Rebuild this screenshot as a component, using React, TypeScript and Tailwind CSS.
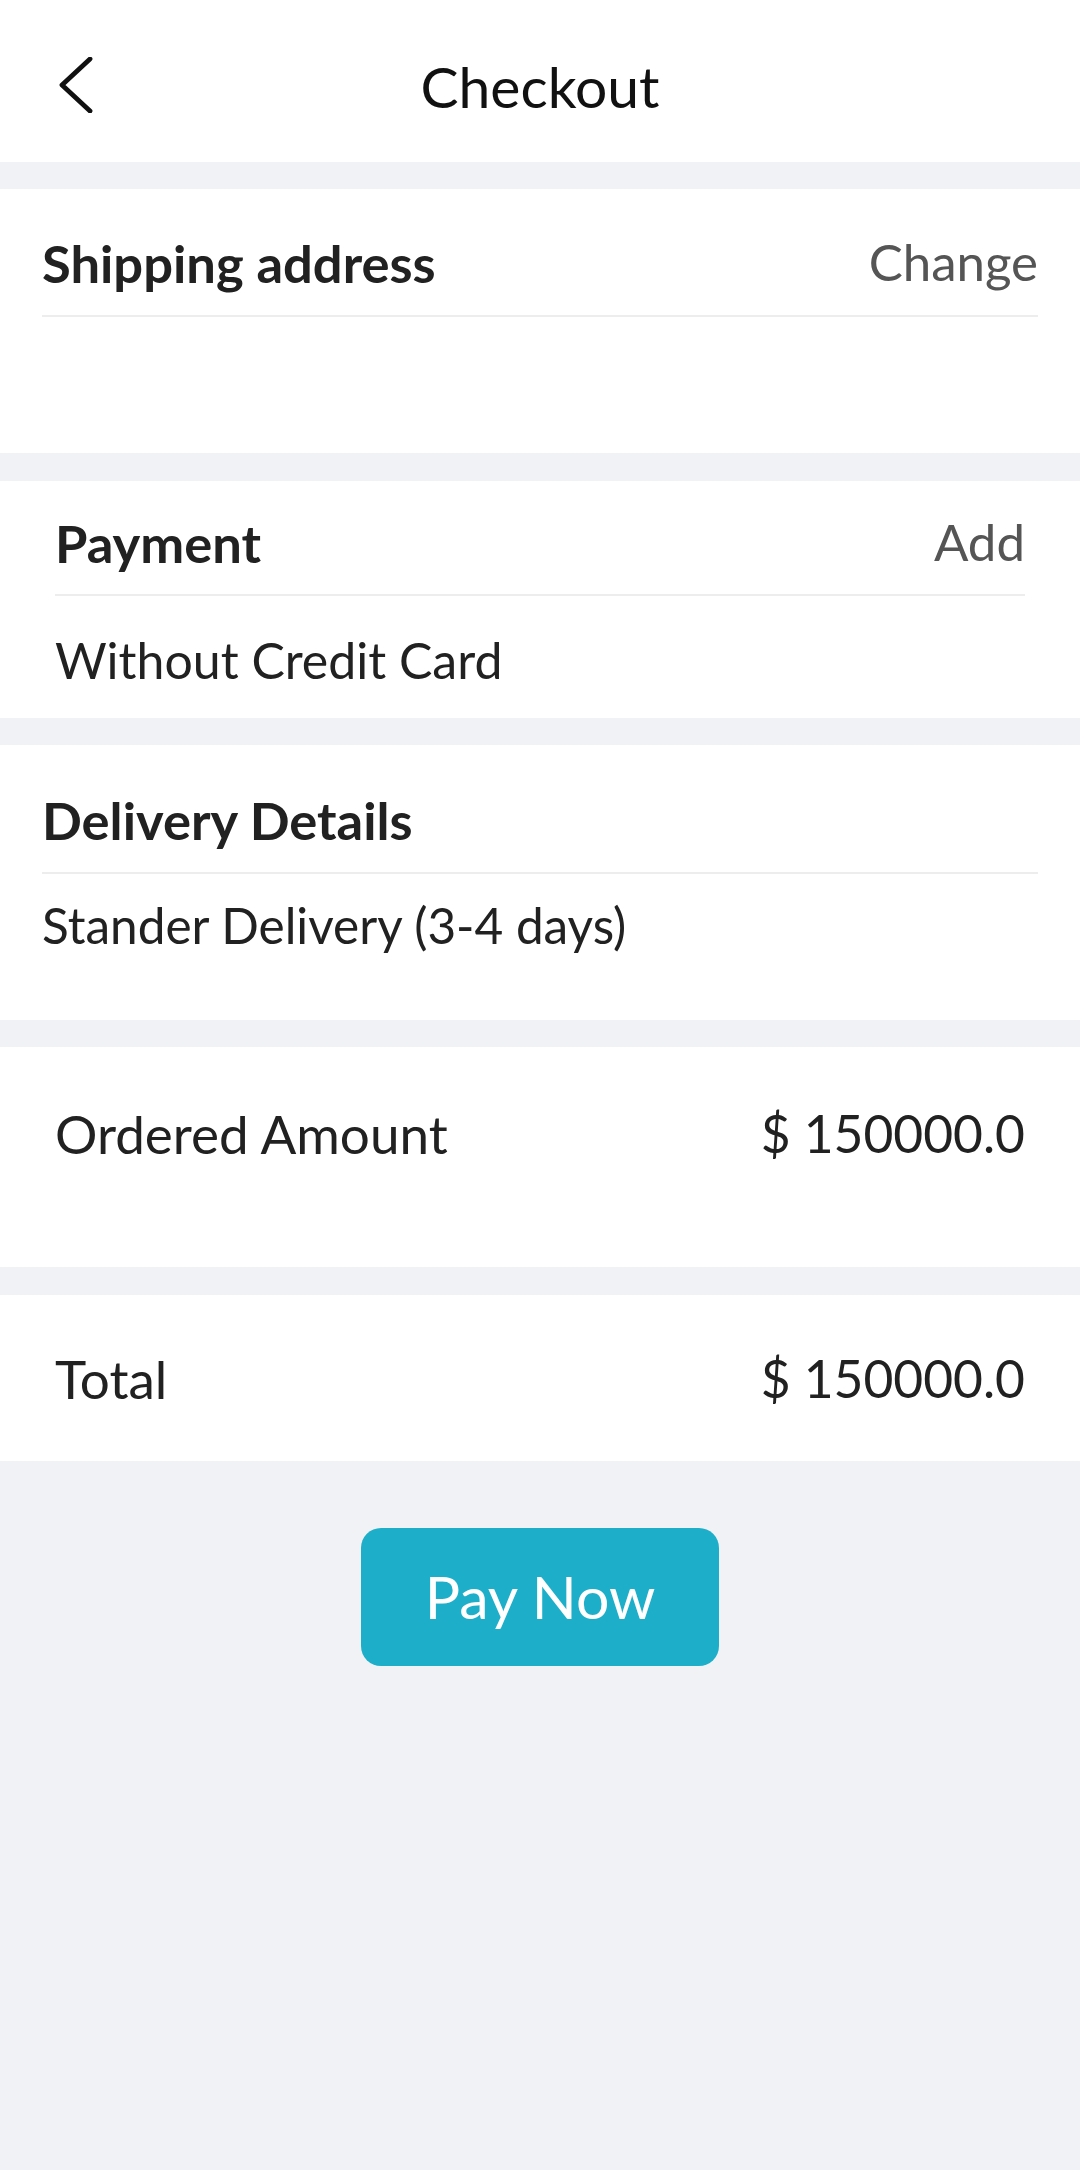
import React from "react";

const font = { fontFamily: "Lato, 'Open Sans', sans-serif" };

function Divider() {
  return <div className="h-[2px] bg-[#ededed]" />;
}

function SectionHead({ title, action }: { title: string; action?: string }) {
  return (
    <div className="flex items-center justify-between h-[62px] leading-[1.2]">
      <span className="text-[52.5px] font-bold text-[#212121]">{title}</span>
      {action && <span className="text-[51px] text-[#555555]">{action}</span>}
    </div>
  );
}

function AmountRow({ label, value }: { label: string; value: string }) {
  return (
    <div className="flex items-center justify-between h-[62px] leading-[1.2] text-[#212121]">
      <span className="text-[53px]">{label}</span>
      <span className="text-[51.5px]">{value}</span>
    </div>
  );
}

export default function App() {
  return (
    <div style={font} className="w-[1080px] min-h-[2170px] bg-[#f1f2f6] flex flex-col">
      {/* header */}
      <header className="bg-white h-[162px] grid grid-cols-[1fr_auto_1fr]">
        <div className="pl-[59px] pt-[57px]">
          <svg width="34" height="56" viewBox="0 0 34 56" fill="none">
            <polyline
              points="31,2 3,28 31,54"
              stroke="#111"
              strokeWidth="4.8"
              strokeLinecap="round"
              strokeLinejoin="round"
            />
          </svg>
        </div>
        <h1 className="pt-[52px] text-[57px] leading-[1.2] text-[#111]">Checkout</h1>
        <div />
      </header>

      <section className="bg-white mt-[27px] px-[42px] pt-[42px]">
        <SectionHead title="Shipping address" action="Change" />
        <div className="mt-[22px]">
          <Divider />
        </div>
        <div className="h-[136px]" />
      </section>

      <section className="bg-white mt-[28px] px-[55px] pt-[30px] pb-[27px]">
        <SectionHead title="Payment" action="Add" />
        <div className="mt-[21px] mb-[33px]">
          <Divider />
        </div>
        <div className="h-[62px] leading-[62px] text-[50px] text-[#212121]">Without Credit Card</div>
      </section>

      <section className="bg-white mt-[27px] px-[42px] pt-[43px] pb-[64px]">
        <SectionHead title="Delivery Details" />
        <div className="mt-[22px] mb-[20px]">
          <Divider />
        </div>
        <div className="h-[62px] leading-[62px] text-[49.5px] text-[#212121]">Stander Delivery (3-4 days)</div>
      </section>

      <section className="bg-white mt-[27px] px-[55px] pt-[56px] pb-[102px]">
        <AmountRow label="Ordered Amount" value="$ 150000.0" />
      </section>

      <section className="bg-white mt-[28px] px-[55px] pt-[53px] pb-[51px]">
        <AmountRow label="Total" value="$ 150000.0" />
      </section>

      <div className="flex justify-center pt-[67px]">
        <button className="w-[358px] h-[138px] rounded-[20px] bg-[#1dafc9] text-white text-[59px] leading-[1.2]">
          Pay Now
        </button>
      </div>
    </div>
  );
}
